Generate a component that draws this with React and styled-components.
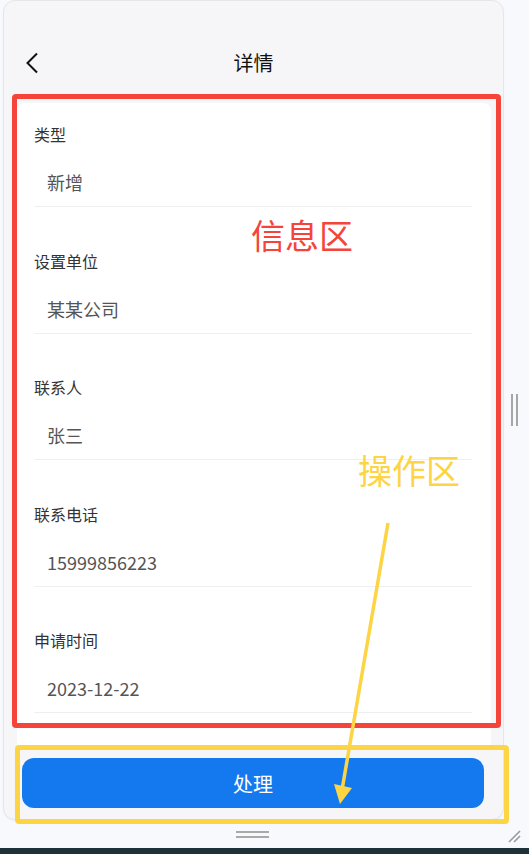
import React from "react";
import styled, { createGlobalStyle } from "styled-components";

const GlobalStyle = createGlobalStyle`
  html, body {
    margin: 0;
    padding: 0;
  }
  body {
    background: #f8f9fc;
    font-family: "Noto Sans CJK SC", "Noto Sans", sans-serif;
  }
`;

const Page = styled.div`
  position: relative;
  width: 529px;
  height: 854px;
  display: flex;
  flex-direction: column;
  overflow: hidden;
  background: #f8f9fc;
`;

const Main = styled.div`
  display: flex;
  align-items: center;
  height: 820px;
`;

const Phone = styled.div`
  margin-left: 3px;
  width: 501px;
  height: 820px;
  box-sizing: border-box;
  display: flex;
  flex-direction: column;
  background: #f6f6f9;
  border: 1px solid #e6e6ea;
  border-radius: 12px;
  box-shadow: 0 1px 2px rgba(0, 0, 0, 0.04);
`;

const NavBar = styled.div`
  position: relative;
  margin-top: 39px;
  height: 46px;
  display: flex;
  align-items: center;
  justify-content: center;
`;

const BackButton = styled.div`
  position: absolute;
  left: 20px;
  top: 12px;
  width: 16px;
  height: 22px;
  display: flex;
`;

const Title = styled.div`
  font-size: 20px;
  line-height: 26px;
  color: #111;
`;

const Card = styled.div`
  flex: 1;
  margin: 17px 12px 0 13px;
  background: #fff;
  border-radius: 8px 8px 0 0;
`;

const Field = styled.div`
  margin: 0 19px 0 17px;
  padding: 43.5px 0 12px;
  border-bottom: 1px solid #efeff1;

  &:first-child {
    padding-top: 21px;
  }
`;

const Label = styled.div`
  font-size: 16px;
  line-height: 20px;
  color: #333;
`;

const Value = styled.div`
  margin-top: 26px;
  padding-left: 13px;
  font-size: 18px;
  line-height: 24px;
  color: #555;
`;

const Footer = styled.div`
  height: 74px;
  box-sizing: border-box;
  padding: 13px 19px 0 18px;
`;

const ActionButton = styled.button`
  width: 100%;
  height: 50px;
  border: none;
  border-radius: 12px;
  background: #1479ef;
  color: #fff;
  font-family: inherit;
  font-size: 20px;
`;

const SideRail = styled.div`
  flex: 1;
  display: flex;
  padding-left: 7px;
  gap: 3px;
`;

const VBar = styled.span`
  width: 2px;
  height: 32px;
  background: #a6a6a6;
`;

const BottomBar = styled.div`
  position: relative;
  height: 28px;
  display: flex;
  flex-direction: column;
  align-items: center;
  padding-top: 11px;
  box-sizing: border-box;
  gap: 3px;
  padding-right: 24px;
`;

const HBar = styled.span`
  width: 33px;
  height: 2px;
  background: #a9a9a9;
`;

const Resize = styled.div`
  position: absolute;
  right: 7px;
  top: 5px;
  width: 16px;
  height: 16px;
`;

const DarkStrip = styled.div`
  height: 6px;
  background: #1f3138;
`;

const Frame = styled.div`
  position: absolute;
  box-sizing: border-box;
  border: 5px solid ${(p) => p.color};
  border-radius: 4px;
  left: ${(p) => p.x}px;
  top: ${(p) => p.y}px;
  width: ${(p) => p.w}px;
  height: ${(p) => p.h}px;
  pointer-events: none;
`;

const Note = styled.div`
  position: absolute;
  left: ${(p) => p.x}px;
  top: ${(p) => p.y}px;
  font-size: 34px;
  line-height: 34px;
  color: ${(p) => p.color};
  white-space: nowrap;
`;

const ArrowLayer = styled.svg`
  position: absolute;
  left: 0;
  top: 0;
  pointer-events: none;
`;

const fields = [
  { label: "类型", value: "新增" },
  { label: "设置单位", value: "某某公司" },
  { label: "联系人", value: "张三" },
  { label: "联系电话", value: "15999856223" },
  { label: "申请时间", value: "2023-12-22" },
];

const RED = "#f5443a";
const YELLOW = "#fdd444";

export default function App() {
  return (
    <>
      <GlobalStyle />
      <Page>
        <Main>
          <Phone>
            <NavBar>
              <BackButton>
                <svg width="16" height="22" viewBox="0 0 16 22">
                  <path d="M13 1.5 L3.5 11 L13 20.5" fill="none" stroke="#111" strokeWidth="2" />
                </svg>
              </BackButton>
              <Title>详情</Title>
            </NavBar>
            <Card>
              {fields.map((f) => (
                <Field key={f.label}>
                  <Label>{f.label}</Label>
                  <Value>{f.value}</Value>
                </Field>
              ))}
            </Card>
            <Footer>
              <ActionButton>处理</ActionButton>
            </Footer>
          </Phone>
          <SideRail>
            <VBar />
            <VBar />
          </SideRail>
        </Main>
        <BottomBar>
          <HBar />
          <HBar />
          <Resize>
            <svg width="16" height="16" viewBox="0 0 16 16">
              <path d="M14 3 L3 14 M14 8 L8 14" stroke="#9a9a9a" strokeWidth="1.6" />
            </svg>
          </Resize>
        </BottomBar>
        <DarkStrip />

        {/* annotations */}
        <Frame color={RED} x={12} y={94} w={489} h={634} />
        <Frame color={YELLOW} x={15} y={745} w={494} h={79} />
        <Note color={RED} x={251} y={218}>信息区</Note>
        <Note color={YELLOW} x={358} y={453}>操作区</Note>
        <ArrowLayer width="529" height="854">
          <line x1="388" y1="523" x2="342" y2="790" stroke={YELLOW} strokeWidth="3.5" />
          <polygon points="340,804 334,784 352,788" fill={YELLOW} />
        </ArrowLayer>
      </Page>
    </>
  );
}
